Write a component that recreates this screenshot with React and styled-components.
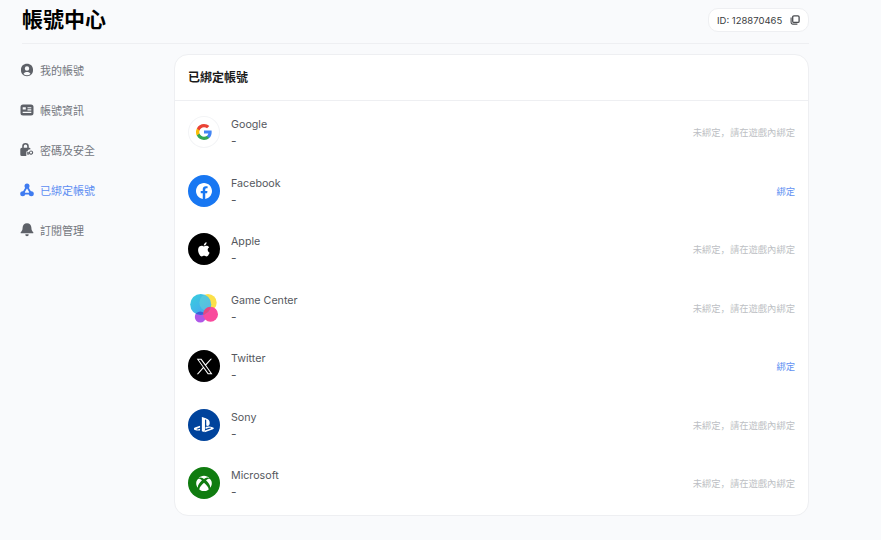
import React from "react";
import styled, { createGlobalStyle } from "styled-components";

const Global = createGlobalStyle`
  html, body { margin: 0; padding: 0; background: #f9fafc; }
  body { font-family: Inter, "Noto Sans CJK TC", "Noto Sans CJK SC", sans-serif; overflow: hidden; }
`;
const Page = styled.div`
  width: 787px;
  height: 540px;
  margin-left: 22px;
  display: flex;
  flex-direction: column;
`;
const Header = styled.header`
  height: 44px;
  box-sizing: border-box;
  display: flex;
  align-items: flex-start;
  justify-content: space-between;
  border-bottom: 1px solid #eeeff2;
`;
const Title = styled.h1`
  margin: 0;
  font-size: 21px;
  line-height: 40px;
  font-weight: 700;
  color: #000;
`;
const IdChip = styled.div`
  margin-top: 8px;
  width: 101px;
  height: 24px;
  box-sizing: border-box;
  border: 1px solid #eeeff2;
  border-radius: 10px;
  background: #fff;
  display: flex;
  align-items: center;
  justify-content: space-between;
  padding: 0 8px 0 8px;
  font-size: 9.5px;
  color: #3a3c40;
`;
const Body = styled.div`
  display: flex;
  padding-top: 10px;
`;
const Side = styled.nav`
  width: 152px;
  flex: none;
  margin-top: -4px;
  display: flex;
  flex-direction: column;
`;
const NavItem = styled.div`
  height: 40px;
  display: flex;
  align-items: center;
  gap: 6px;
  margin-left: -2px;
  font-size: 11px;
  color: ${p => (p.$active ? "#5c8cf2" : "#74777e")};
  svg { flex: none; color: ${p => (p.$active ? "#3f7bf0" : "#5e6168")}; }
`;
const Card = styled.section`
  width: 635px;
  height: 462px;
  box-sizing: border-box;
  background: #fff;
  border: 1px solid #eeeff2;
  border-radius: 14px;
  display: flex;
  flex-direction: column;
`;
const CardHead = styled.div`
  height: 46px;
  flex: none;
  box-sizing: border-box;
  border-bottom: 1px solid #eeeff2;
  padding: 0 0 2px 13px;
  display: flex;
  align-items: center;
  font-size: 12px;
  font-weight: 600;
  color: #1a1a1a;
`;
const Rows = styled.div`
  padding-top: 2px;
  display: flex;
  flex-direction: column;
`;
const Row = styled.div`
  height: 58.5px;
  display: flex;
  align-items: center;
  padding: 0 13px;
`;
const Logo = styled.div`
  width: 32px;
  height: 32px;
  border-radius: 50%;
  flex: none;
  display: flex;
  align-items: center;
  justify-content: center;
  background: ${p => p.$bg || "transparent"};
  box-shadow: ${p => (p.$ring ? "inset 0 0 0 1px #f3f4f6" : "none")};
`;
const Info = styled.div`
  margin-left: 11px;
  flex: 1;
  display: flex;
  flex-direction: column;
  color: #55585e;
  font-size: 10.7px;
  line-height: 16px;
`;
const Name = styled.span`
  height: 16px;
  padding-top: 1px;
`;
const Dash = styled.span`
  height: 15px;
  font-size: 12px;
`;
const Hint = styled.span`
  font-family: Inter, "Noto Sans CJK SC", sans-serif;
  font-size: 9.3px;
  color: #bdbfc4;
`;
const BindLink = styled.span`
  font-size: 9.3px;
  color: #6391f2;
`;

const UserIcon = () => (
  <svg width="14" height="14" viewBox="0 0 14 14"><path fillRule="evenodd" fill="currentColor" d="M7 .8c3.500 0 6 2.300 6 5.700v1c0 3.300-2.500 5.700-6 5.700S1 10.800 1 7.500v-1C1 3.100 3.500.8 7 .8ZM7 3.300a2.200 2.200 0 1 0 0 4.400 2.200 2.200 0 0 0 0-4.400ZM3.500 10.900a5 5 0 0 0 7 0C9.800 9.600 8.600 9 7 9s-2.800.6-3.500 1.900Z"/></svg>
);
const CardIcon = () => (
  <svg width="14" height="14" viewBox="0 0 14 14"><path fillRule="evenodd" fill="currentColor" d="M3 1.500h8A2.500 2.500 0 0 1 13.500 4v6A2.500 2.500 0 0 1 11 12.500H3A2.500 2.500 0 0 1 .5 10V4A2.500 2.500 0 0 1 3 1.500ZM2.700 4.200v2.300h3.100V4.200ZM7.500 4.200v1.100h3.800V4.200ZM7.500 6.300v1.100h3.800V6.300ZM2.700 8.800v1.100h8.600V8.800Z"/></svg>
);
const LockIcon = () => (
  <svg width="14" height="14" viewBox="0 0 14 14"><path fillRule="evenodd" fill="currentColor" d="M5.500 0a3.300 3.300 0 0 1 3.300 3.300v1.500h.3a1.500 1.500 0 0 1 1.500 1.400 3 3 0 0 0-3.200 2.300H6.300v4.500H1.800A1.500 1.500 0 0 1 .3 11.500V6.300a1.500 1.500 0 0 1 1.500-1.500h.4V3.300A3.300 3.300 0 0 1 5.500 0ZM5.500 1.600a1.700 1.700 0 0 0-1.700 1.700v1.500h3.400V3.300a1.700 1.700 0 0 0-1.700-1.700ZM11 7.400a2.200 2.200 0 1 1-2 3.100H8.600V12H7.500V10.500h-.6V9.300h2.200A2.200 2.200 0 0 1 11 7.400Zm0 1.100a1.100 1.100 0 1 0 0 2.200 1.100 1.100 0 0 0 0-2.200Z"/></svg>
);
const LinkIcon = () => (
  <svg width="14" height="14" viewBox="0 0 14 14" fill="none"><path d="M7 3.500 2.800 10.700H11.200Z" stroke="currentColor" strokeWidth="1.800"/><circle cx="7" cy="3" r="2.500" fill="currentColor"/><circle cx="2.700" cy="10.700" r="2.500" fill="currentColor"/><circle cx="11.300" cy="10.700" r="2.500" fill="currentColor"/></svg>
);
const BellIcon = () => (
  <svg width="14" height="14" viewBox="0 0 14 14"><path fill="currentColor" d="M7 .3c2.700 0 4.300 2 4.400 4.500 0 2.200.6 3.200 1.800 4.400.4.400.2 1-.4 1H1.200c-.6 0-.8-.6-.4-1C2 8 2.600 7 2.600 4.800 2.700 2.300 4.300.3 7 .3ZM5.300 11.200h3.400A1.800 1.800 0 0 1 7 13.200a1.800 1.800 0 0 1-1.700-2Z"/></svg>
);
const CopyIcon = () => (
  <svg width="10" height="10" viewBox="0 0 10 10" fill="none"><rect x="2.700" y="0.800" width="6.400" height="6.600" rx="1.200" stroke="#4a4c50" strokeWidth="1.300"/><path d="M1.100 2.500v4.800a1.800 1.800 0 0 0 1.800 1.800h4.500" stroke="#4a4c50" strokeWidth="1.100"/></svg>
);

const Google = () => (
  <svg width="16" height="16" viewBox="0 0 24 24">
    <path fill="#4285F4" d="M23.500 12.270c0-.82-.07-1.600-.2-2.360H12v4.460h6.450a5.520 5.520 0 0 1-2.400 3.620v3h3.880c2.270-2.090 3.570-5.170 3.570-8.720Z"/>
    <path fill="#34A853" d="M12 24c3.240 0 5.950-1.070 7.930-2.910l-3.880-3c-1.070.72-2.440 1.150-4.050 1.150-3.120 0-5.760-2.110-6.700-4.940H1.300v3.100A11.990 11.990 0 0 0 12 24Z"/>
    <path fill="#FBBC05" d="M5.300 14.300a7.200 7.200 0 0 1 0-4.600V6.600h-4a12 12 0 0 0 0 10.800l4-3.100Z"/>
    <path fill="#EA4335" d="M12 4.760c1.760 0 3.340.6 4.580 1.790l3.440-3.440C17.940 1.170 15.240 0 12 0 7.310 0 3.260 2.690 1.300 6.600l4 3.100C6.240 6.870 8.880 4.760 12 4.760Z"/>
  </svg>
);
const Facebook = () => (
  <svg width="16" height="16" viewBox="0 0 24 24"><path fill="#fff" d="M24 12.070C24 5.400 18.630 0 12 0S0 5.400 0 12.070c0 6.030 4.390 11.020 10.130 11.930v-8.440H7.080v-3.490h3.050V9.410c0-3.020 1.790-4.690 4.530-4.690 1.310 0 2.690.24 2.690.24v2.970h-1.520c-1.490 0-1.960.93-1.960 1.880v2.260h3.330l-.53 3.490h-2.800V24C19.610 23.090 24 18.100 24 12.070Z"/></svg>
);
const Apple = () => (
  <svg width="15" height="15" viewBox="0 0 24 24"><path fill="#fff" d="M17.050 12.540c-.03-2.850 2.330-4.220 2.430-4.290-1.320-1.940-3.390-2.200-4.120-2.230-1.750-.18-3.420 1.030-4.310 1.030-.89 0-2.260-1-3.720-.98-1.910.03-3.680 1.110-4.660 2.820-1.990 3.450-.51 8.550 1.430 11.350.95 1.370 2.080 2.910 3.560 2.850 1.430-.06 1.970-.92 3.700-.92 1.730 0 2.210.92 3.720.89 1.540-.03 2.510-1.390 3.450-2.770 1.090-1.590 1.530-3.130 1.560-3.210-.03-.02-2.990-1.150-3.040-4.540ZM14.210 4.170c.79-.96 1.320-2.290 1.180-3.610-1.140.05-2.510.76-3.330 1.710-.73.85-1.370 2.200-1.200 3.500 1.270.1 2.560-.65 3.350-1.600Z"/></svg>
);
const GameCenter = () => (
  <svg width="32" height="32" viewBox="0 0 32 32">
    <defs>
      <linearGradient id="gcb" x1="0" y1="0" x2="1" y2="1"><stop offset="0" stopColor="#38d0dc"/><stop offset="1" stopColor="#4a9ff5"/></linearGradient>
      <clipPath id="gcc"><circle cx="12.700" cy="12.500" r="10.500"/></clipPath>
    </defs>
    <circle cx="20" cy="10.700" r="8.700" fill="#fbe04a"/>
    <circle cx="12.300" cy="25" r="5.500" fill="#ae58e8"/>
    <circle cx="22.500" cy="22.300" r="7.500" fill="#f94a9d"/>
    <circle cx="12.700" cy="12.500" r="10.500" fill="url(#gcb)"/>
    <g clipPath="url(#gcc)">
      <circle cx="20" cy="10.700" r="8.700" fill="#7fe0c8" opacity=".35"/>
      <circle cx="12.300" cy="25" r="5.500" fill="#3b5fd8"/>
      <circle cx="22.500" cy="22.300" r="7.500" fill="#e8457f"/>
    </g>
  </svg>
);
const XLogo = () => (
  <svg width="17" height="17" viewBox="0 0 24 24"><path fill="#fff" d="M14.280 10.160 22.550 1h-1.960l-7.180 7.950L7.680 1H1.060l8.670 12.020L1.060 23h1.960l7.580-8.400 6.060 8.400h6.620l-9-12.840ZM11.600 13.500l-.88-1.210L3.730 2.420h3.010l5.640 7.800.88 1.220 7.330 10.140h-3.010L11.600 13.500Z"/></svg>
);
const Sony = () => (
  <svg width="21" height="21" viewBox="0 0 24 24"><path fill="#fff" d="M8.980 3.500v16.220l3.560 1.140V7.260c0-.64.28-1.070.74-.92.6.17.71.76.71 1.400v5.430c2.220 1.080 3.970 0 3.970-2.850 0-2.930-1.020-4.230-4.030-5.270-1.190-.4-3.390-1.070-4.950-1.550ZM13.220 18.510l5.720-2.040c.65-.23.75-.56.220-.73-.53-.17-1.480-.12-2.130.11l-3.810 1.350v-2.160l.22-.07s1.100-.39 2.650-.56c1.550-.17 3.450.02 4.940.59 1.680.53 1.870 1.310 1.440 1.850-.43.54-1.470.93-1.470.93l-8.780 3.150v-2.020ZM1.060 18.270c-1.720-.48-2.010-1.490-1.220-2.070.73-.54 1.970-.95 1.970-.95l5.130-1.820v2.080l-3.690 1.320c-.65.23-.75.56-.22.730.53.18 1.480.13 2.130-.1l1.780-.65v1.860l-.35.06c-1.780.29-3.670.17-5.530-.46Z"/></svg>
);
const Xbox = () => (
  <svg width="16" height="16" viewBox="0 0 24 24"><path fill="#fff" d="M4.100 4.360C5.900 2.500 8.800 1 12 1s6.100 1.500 7.900 3.360c-2.500-1.400-5.400-.9-7.900 1.500-2.500-2.400-5.400-2.900-7.900-1.500ZM5.500 22.300a11.900 11.900 0 0 0 13 0c1.800-1.300-1.700-6.700-6.500-10.700-4.800 4-8.300 9.400-6.500 10.700ZM3 6c-1.900 1.900-2.700 4-2.700 6.300 0 3 1.100 5.200 2.500 6.900-.7-3 2.400-7.700 6.200-11.300C7 6.200 5 4.900 3 6ZM21 6c1.900 1.900 2.700 4 2.700 6.300 0 3-1.100 5.200-2.500 6.900.7-3-2.400-7.700-6.200-11.300 2-1.700 4-3 6-1.900Z"/></svg>
);

const HINT = "未綁定，請在遊戲內綁定";
const accounts = [
  { name: "Google", logo: <Google />, ring: true, bg: "#fff" },
  { name: "Facebook", logo: <Facebook />, bg: "#1877f2", bind: true },
  { name: "Apple", logo: <Apple />, bg: "#000" },
  { name: "Game Center", logo: <GameCenter /> },
  { name: "Twitter", logo: <XLogo />, bg: "#000", bind: true },
  { name: "Sony", logo: <Sony />, bg: "#00439c" },
  { name: "Microsoft", logo: <Xbox />, bg: "#107c10" },
];
const nav = [
  { label: "我的帳號", icon: <UserIcon /> },
  { label: "帳號資訊", icon: <CardIcon /> },
  { label: "密碼及安全", icon: <LockIcon /> },
  { label: "已綁定帳號", icon: <LinkIcon />, active: true },
  { label: "訂閱管理", icon: <BellIcon /> },
];

export default function App() {
  return (
    <>
      <Global />
      <Page>
        <Header>
          <Title>帳號中心</Title>
          <IdChip>ID: 128870465 <CopyIcon /></IdChip>
        </Header>
        <Body>
          <Side>
            {nav.map(n => (
              <NavItem key={n.label} $active={n.active}>{n.icon}{n.label}</NavItem>
            ))}
          </Side>
          <Card>
            <CardHead>已綁定帳號</CardHead>
            <Rows>
              {accounts.map(a => (
                <Row key={a.name}>
                  <Logo $bg={a.bg} $ring={a.ring}>{a.logo}</Logo>
                  <Info>
                    <Name>{a.name}</Name>
                    <Dash>-</Dash>
                  </Info>
                  {a.bind ? <BindLink>綁定</BindLink> : <Hint>{HINT}</Hint>}
                </Row>
              ))}
            </Rows>
          </Card>
        </Body>
      </Page>
    </>
  );
}
